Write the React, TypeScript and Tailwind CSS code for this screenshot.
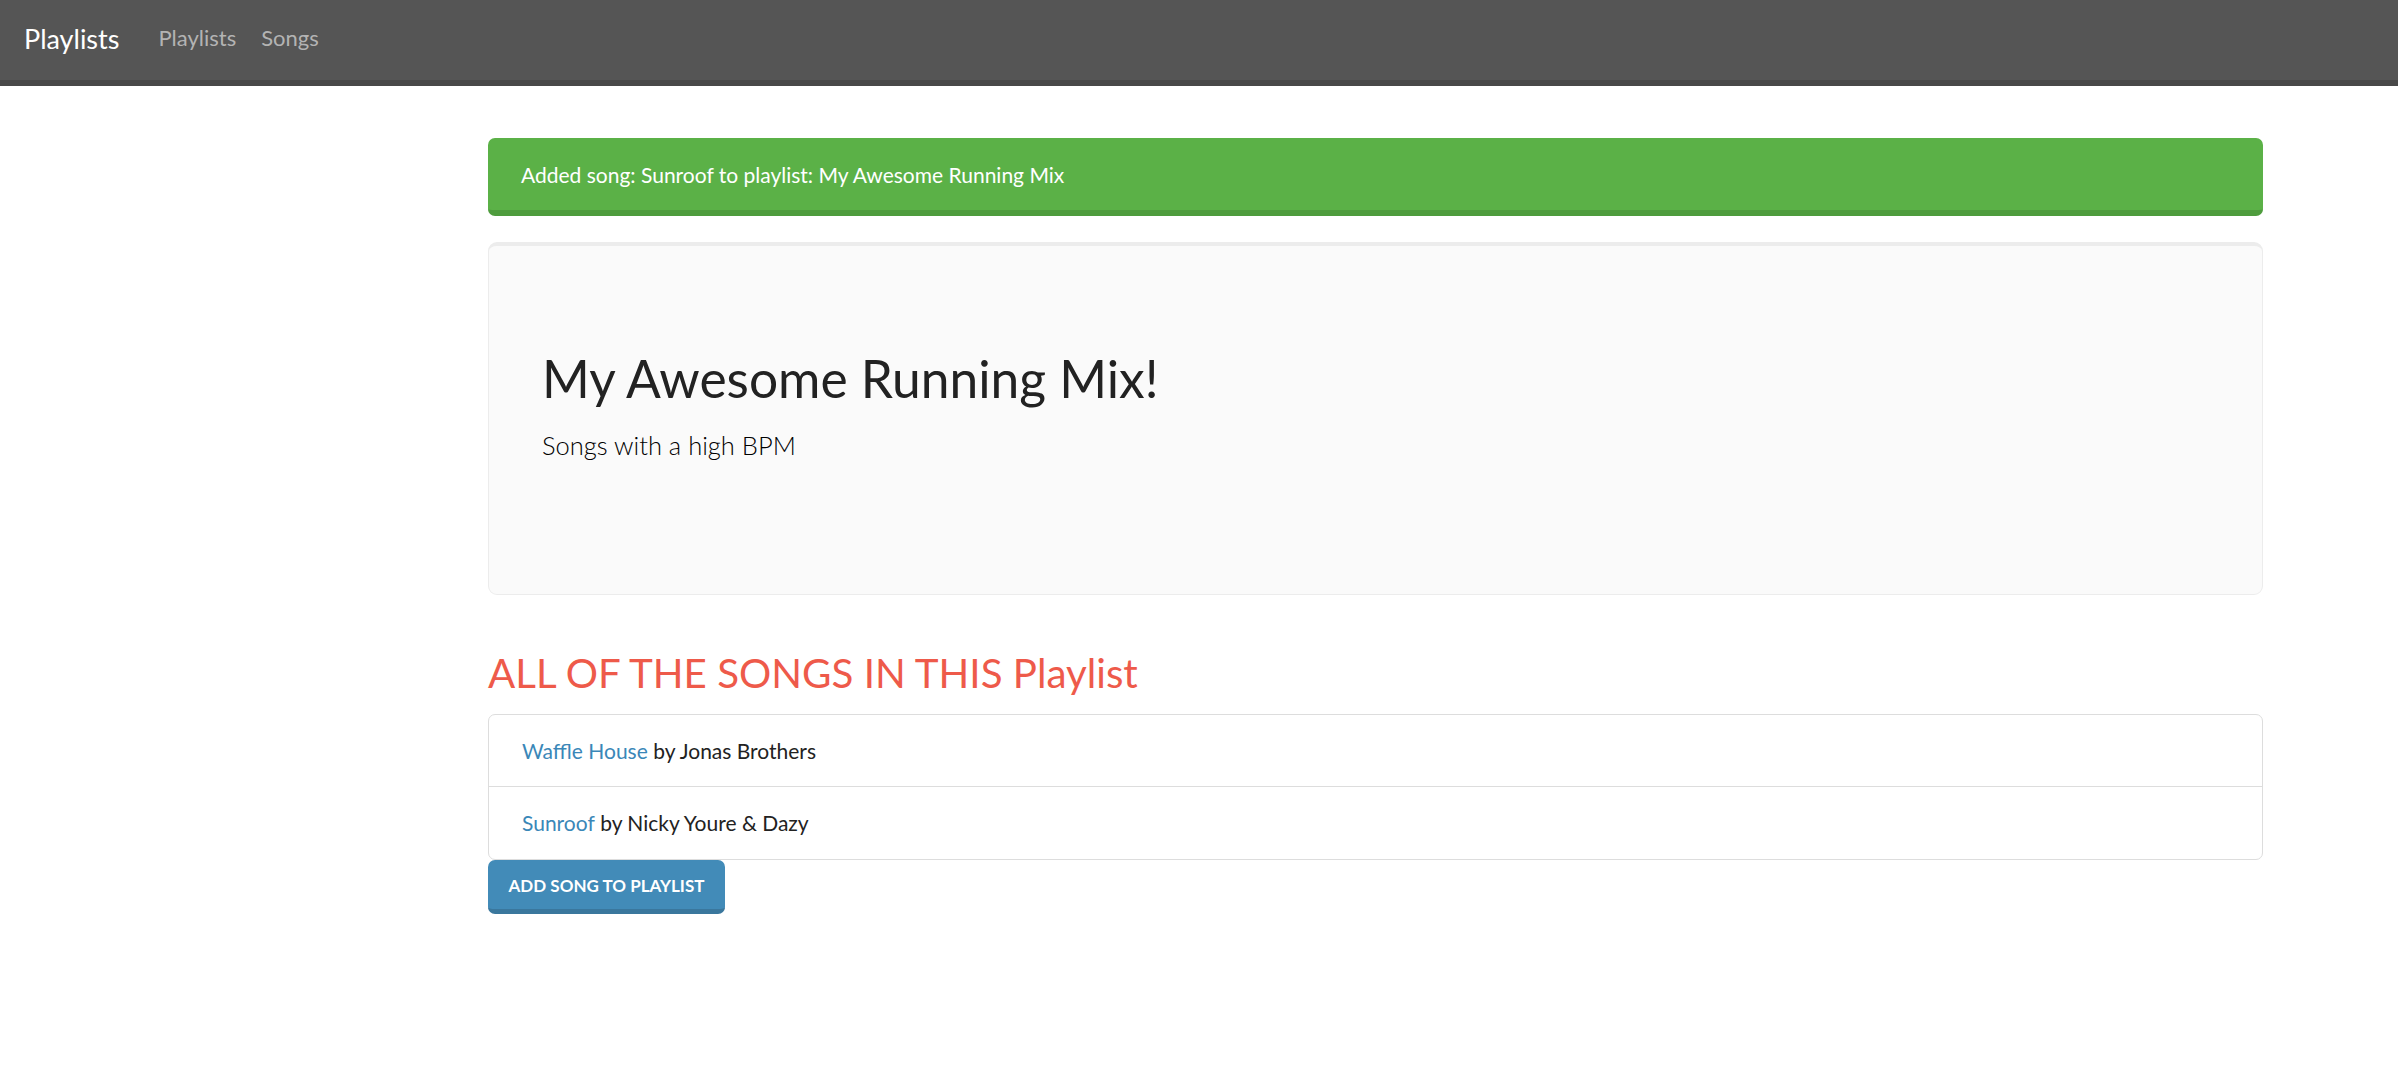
import React from "react";

export default function App() {
  const font = { fontFamily: "Lato, 'Noto Sans', sans-serif" };
  return (
    <div className="min-h-[1072px] bg-white" style={font}>
      <nav className="h-[86px] bg-[#555555] border-b-[6px] border-[#484848] flex items-center pb-[4px]">
        <a className="ml-[24px] text-[27px] text-white leading-none">Playlists</a>
        <a className="ml-[39px] text-[22px] text-[#b3b3b3] leading-none">Playlists</a>
        <a className="ml-[25px] text-[22px] text-[#b3b3b3] leading-none">Songs</a>
      </nav>
      <main className="ml-[488px] w-[1775px] pt-[52px]">
        <div className="h-[78px] rounded-[7px] bg-[#5bb147] border-b-[6px] border-[#4e9c3d] flex items-center pl-[33px] pt-[1px]">
          <span className="text-[21px] text-white">Added song: Sunroof to playlist: My Awesome Running Mix</span>
        </div>
        <div className="mt-[26px] h-[353px] rounded-[9px] bg-[#fafafa] border border-[#ececec] border-t-[4px] pl-[53px] flex flex-col justify-center pb-[26px]">
          <h1 className="text-[51.5px] text-[#222222] leading-[1.1]">My Awesome Running Mix!</h1>
          <p className="mt-[22px] text-[25.5px] font-light text-[#000000] leading-[1.4]">Songs with a high BPM</p>
        </div>
        <h2 className="mt-[53px] mb-[16px] h-[50px] flex items-center text-[40.3px] text-[#ee5a4a] leading-none">ALL OF THE SONGS IN THIS Playlist</h2>
        <ul className="border border-[#dddddd] rounded-[7px]">
          <li className="h-[72px] flex items-center pl-[33px] text-[21px] text-[#222222] border-b border-[#dddddd]">
            <a className="text-[#3a87b8]">Waffle House</a>
            <span>&nbsp;by Jonas Brothers</span>
          </li>
          <li className="h-[72px] flex items-center pl-[33px] text-[21px] text-[#222222]">
            <a className="text-[#3a87b8]">Sunroof</a>
            <span>&nbsp;by Nicky Youre &amp; Dazy</span>
          </li>
        </ul>
        <button className="h-[54px] w-[237px] rounded-[7px] bg-[#428bb8] border-b-[5px] border-[#3a779d] text-white font-bold text-[17px] uppercase flex items-center justify-center pt-[3px]">
          Add Song to Playlist
        </button>
      </main>
    </div>
  );
}
